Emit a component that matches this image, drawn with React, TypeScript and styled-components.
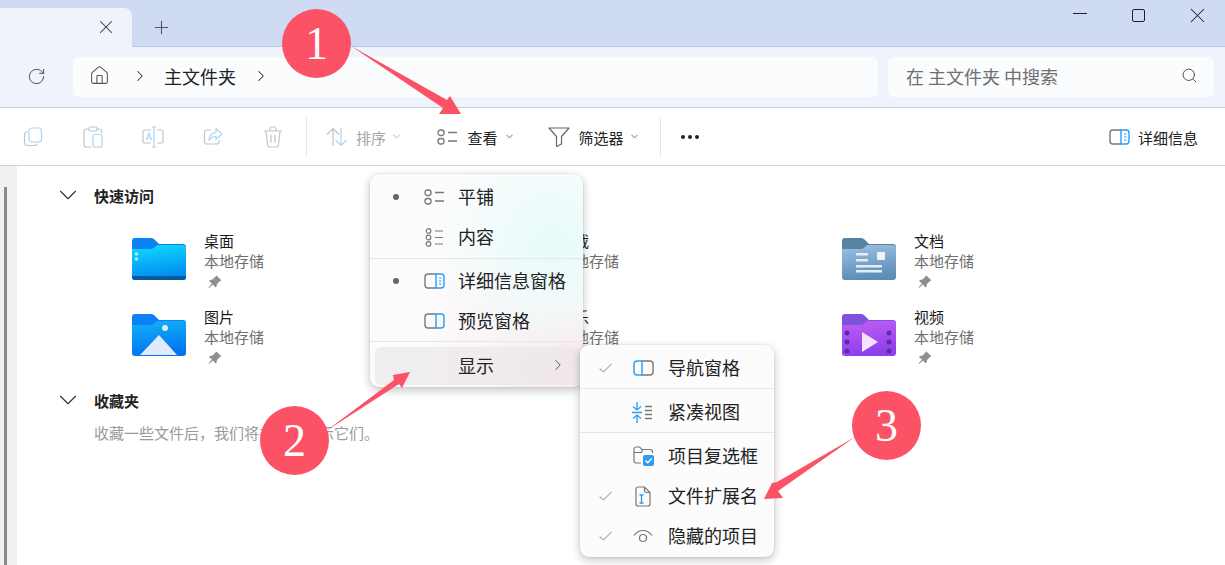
import React from 'react';
import styled, { createGlobalStyle } from 'styled-components';
import { ChevronDown, ChevronRight, Check, Home, Plus, RotateCw, Search, X } from 'lucide-react';

const GlobalStyle = createGlobalStyle`
  html, body { margin: 0; padding: 0; background: #fff; }
  * { box-sizing: border-box; }
`;

const Page = styled.div`
  position: relative;
  width: 1225px;
  height: 565px;
  overflow: hidden;
  background: #fff;
  color: #1c1c1c;
  font-family: "Noto Sans CJK SC", "Noto Sans", sans-serif;
`;

const TabBar = styled.div`
  display: flex;
  align-items: flex-end;
  height: 47px;
  background: #cfdaf3;
  border-bottom: 1px solid #bcc8dc;
`;

const Tab = styled.div`
  display: flex;
  align-items: center;
  justify-content: flex-end;
  width: 132px;
  height: 39px;
  margin-bottom: -1px;
  padding: 0 15px 1px 0;
  background: #eef3fc;
  border-top-right-radius: 8px;
  color: #333;
`;

const NewTab = styled.div`
  display: flex;
  align-items: center;
  justify-content: center;
  width: 58px;
  height: 38px;
  color: #555;
`;

const WindowControls = styled.div`
  display: flex;
  margin: 0 -2px 0 auto;
  align-self: flex-start;
  height: 30px;
`;

const WindowButton = styled.div`
  display: flex;
  align-items: center;
  justify-content: center;
  width: 59px;
  height: 30px;
  color: #222;
`;

const MinimizeLine = styled.span`
  width: 14px;
  height: 1px;
  margin-bottom: 4px;
  background: #222;
`;

const MaximizeBox = styled.span`
  width: 13px;
  height: 13px;
  border: 1.3px solid #222;
  border-radius: 2px;
`;

const AddressBar = styled.div`
  display: flex;
  align-items: center;
  height: 61px;
  padding: 0 11px 1px 0;
  background: #eff3fc;
  border-bottom: 1px solid #c8ccd8;
`;

const RefreshSlot = styled.div`
  display: flex;
  justify-content: center;
  width: 72px;
  margin-right: 1px;
  color: #444;
`;

const Breadcrumb = styled.div`
  display: flex;
  align-items: center;
  flex: 1;
  height: 40px;
  padding: 0 0 2px 16px;
  background: #fbfcfe;
  border-radius: 6px;
  font-size: 18px;
  color: #222;
`;

const Crumb = styled.span`
  margin: 0 16px 0 15px;
`;

const Separator = styled.span<{ $lead?: number }>`
  display: flex;
  margin-left: ${(p) => p.$lead ?? 0}px;
  color: #333;
`;

const SearchBox = styled.div`
  display: flex;
  align-items: center;
  justify-content: space-between;
  width: 326px;
  height: 40px;
  margin-left: 10px;
  padding: 0 16px 2px 18px;
  background: #fbfcfe;
  border-radius: 6px;
  font-size: 18px;
  color: #6f6f6f;
`;

const Toolbar = styled.div`
  display: flex;
  align-items: center;
  height: 58px;
  padding-left: 3px;
  background: #fff;
  border-bottom: 1px solid #cdd0d8;
`;

const IconButton = styled.div`
  display: flex;
  align-items: center;
  justify-content: center;
  width: 60px;
  height: 40px;
`;

const ToolDivider = styled.div<{ $lead?: number }>`
  width: 1px;
  height: 40px;
  margin-left: ${(p) => p.$lead ?? 0}px;
  background: #e8e8e8;
`;

const TextButton = styled.div<{ $width: number; $disabled?: boolean; $gap: number; $pad?: number }>`
  display: flex;
  align-items: center;
  gap: ${(p) => p.$gap}px;
  width: ${(p) => p.$width}px;
  padding-left: ${(p) => p.$pad ?? 0}px;
  font-size: 15px;
  color: ${(p) => (p.$disabled ? '#a6a6a6' : '#222')};
`;

const ButtonLabel = styled.span`
  position: relative;
  top: 1px;
`;

const Caret = styled.span<{ $disabled?: boolean }>`
  display: flex;
  margin-left: -3px;
  color: ${(p) => (p.$disabled ? '#aaa' : '#666')};
`;

const Dots = styled.div`
  display: flex;
  gap: 3px;
  margin-left: 20px;
`;

const Dot = styled.span`
  width: 4px;
  height: 4px;
  border-radius: 50%;
  background: #222;
`;

const DetailsButton = styled.div`
  display: flex;
  align-items: center;
  gap: 8px;
  margin-left: auto;
  padding-right: 27px;
  font-size: 15px;
  color: #222;
`;

const Body = styled.div`
  display: flex;
  height: 399px;
`;

const Rail = styled.div`
  width: 17px;
  padding: 21px 0 0 4px;
  background: #f1f1f1;
`;

const RailThumb = styled.div`
  width: 3px;
  height: 100%;
  background: #8a8a8a;
`;

const Content = styled.div`
  flex: 1;
  padding: 19px 0 0 43px;
`;

const SectionHead = styled.div`
  display: flex;
  align-items: center;
  gap: 19px;
  height: 20px;
  font-size: 15px;
  font-weight: 700;
  color: #222;
`;

const SectionCaret = styled.span`
  display: flex;
  justify-content: center;
  width: 15px;
  color: #333;

  svg {
    flex-shrink: 0;
  }
`;

const Grid = styled.div`
  display: grid;
  grid-template-columns: repeat(3, 355px);
  grid-auto-rows: 76px;
  margin: 29px 0 0 72px;
  height: 156px;
`;

const Item = styled.div`
  display: flex;
  gap: 18px;
`;

const FolderSlot = styled.div`
  padding-top: 4px;
  width: 54px;
  height: 48px;
`;

const ItemText = styled.div`
  display: flex;
  flex-direction: column;
  font-size: 15px;
  line-height: 20px;
  margin-top: -3px;
`;

const ItemName = styled.div`
  color: #1a1a1a;
`;

const ItemSub = styled.div`
  color: #6e6e6e;
`;

const PinSlot = styled.div`
  display: flex;
  height: 22px;
  align-items: center;
  padding-left: 4px;
`;

const EmptyNote = styled.div`
  margin: 13px 0 0 34px;
  font-size: 15px;
  line-height: 20px;
  color: #9a9a9a;
`;

const Menu = styled.div<{ $left: number; $top: number; $width: number; $height: number; $glow?: boolean }>`
  position: absolute;
  left: ${(p) => p.$left}px;
  top: ${(p) => p.$top}px;
  width: ${(p) => p.$width}px;
  height: ${(p) => p.$height}px;
  padding-top: 3px;
  border-radius: 9px;
  background: ${(p) =>
    p.$glow
      ? 'radial-gradient(circle at 85% 32%, #e6fbfa 0%, rgba(240,252,252,.7) 28%, rgba(255,255,255,0) 52%), radial-gradient(circle at 95% 88%, #f8e6ea 0%, rgba(250,240,242,.7) 30%, rgba(255,255,255,0) 60%), #fcfcfc'
      : '#fcfcfc'};
  box-shadow: 0 3px 10px rgba(0, 0, 0, 0.24), 0 0 2px rgba(0, 0, 0, 0.12);
`;

const MenuRow = styled.div<{ $hover?: boolean }>`
  display: flex;
  align-items: center;
  height: ${(p) => (p.$hover ? 38 : 40)}px;
  margin: ${(p) => (p.$hover ? '0 3px 0 5px' : '0')};
  padding: 0 0 2px ${(p) => (p.$hover ? 83 : 88)}px;
  position: relative;
  font-size: 18px;
  color: #222;
  border-radius: 6px;
  background: ${(p) => (p.$hover ? 'rgba(236,232,234,.72)' : 'transparent')};
`;

const RowMark = styled.div<{ $left: number }>`
  position: absolute;
  left: ${(p) => p.$left}px;
  top: 0;
  height: 100%;
  display: flex;
  align-items: center;
  color: #666;
`;

const Bullet = styled.span`
  width: 6px;
  height: 6px;
  border-radius: 50%;
  background: #666;
`;

const MenuDivider = styled.div<{ $above?: number; $below?: number }>`
  height: 1px;
  margin: ${(p) => p.$above ?? 0}px 0 ${(p) => p.$below ?? 3}px;
  background: #e6e6e6;
`;

const SubArrow = styled.span`
  position: absolute;
  right: 13px;
  display: flex;
  color: #555;
`;

const Badge = styled.div<{ $left: number; $top: number }>`
  position: absolute;
  left: ${(p) => p.$left}px;
  top: ${(p) => p.$top}px;
  display: flex;
  align-items: center;
  justify-content: center;
  width: 69px;
  height: 69px;
  border-radius: 50%;
  background: #fb5266;
  color: #fff;
  font-family: "Liberation Serif", serif;
  font-size: 46px;
`;

const ArrowLayer = styled.svg`
  position: absolute;
  left: 0;
  top: 0;
`;

const GRAY = '#777';
const BLUE = '#2d9cf0';

const CopyIcon = () => (
  <svg width="20" height="20" viewBox="0 0 20 20" fill="none" strokeWidth="1.2">
    <path d="M4.5 4.5C2.8 5 1.5 6 1.5 8v7c0 2 1.2 3.5 3.5 3.5h6.5c1.5 0 2.6-.8 3-2" stroke="#c4c4c4" />
    <rect x="6" y="1" width="12.5" height="14" rx="3" stroke="#a9d6f6" />
  </svg>
);

const PasteIcon = () => (
  <svg width="20" height="22" viewBox="0 0 20 22" fill="none" strokeWidth="1.2">
    <path d="M6 3H3.5C2 3 1 4 1 5.5v13C1 20 2 21 3.5 21H8M14 3h2.500C18 3 18.500 4 18.500 5v2" stroke="#c4c4c4" />
    <rect x="6" y="1" width="8" height="4" rx="1.5" stroke="#c4c4c4" />
    <rect x="10" y="8.500" width="9" height="12.500" rx="2" stroke="#a9d6f6" />
  </svg>
);

const RenameIcon = () => (
  <svg width="22" height="22" viewBox="0 0 22 22" fill="none" strokeWidth="1.2">
    <path d="M9 4H3C1.800 4 1 5 1 6v9c0 1.200.8 2 2 2h6M15 4h4c1.200 0 2 1 2 2v9c0 1.200-.8 2-2 2h-4" stroke="#c4c4c4" />
    <path d="M12 1v20M9.500 1h5M9.500 21h5" stroke="#a9d6f6" />
    <path d="M4.500 14 7 7l2.500 7M5.500 12h3" stroke="#a9d6f6" />
  </svg>
);

const ShareIcon = () => (
  <svg width="20" height="20" viewBox="0 0 20 20" fill="none" strokeWidth="1.2">
    <path d="M8 3H4C2.500 3 1.500 4 1.500 5.500v9C1.500 16 2.500 17 4 17h9.500c1.500 0 2.500-1 2.500-2.500V13" stroke="#c4c4c4" />
    <path d="M13 1.500 19 7l-6 5.500V9.500c-3.500 0-5.500 1-7 4 0-5 2.500-7.500 7-8z" stroke="#a9d6f6" />
  </svg>
);

const TrashIcon = () => (
  <svg width="20" height="22" viewBox="0 0 20 22" fill="none" stroke="#c4c4c4" strokeWidth="1.2">
    <path d="M1 5h18M7 5V3c0-1 .8-2 2-2h2c1.200 0 2 1 2 2v2M3 5l1.500 14c.1 1.200 1 2 2 2h7c1 0 1.900-.8 2-2L17 5M8 9v8M12 9v8" />
  </svg>
);

const SortIcon = () => (
  <svg width="22" height="20" viewBox="0 0 22 20" fill="none" strokeWidth="1.2">
    <path d="M7 19V1.500M1 7.500l6-6 6 6" stroke="#c4c4c4" />
    <path d="M15 1v17.500M9.500 13l5.500 5.500 5.500-5.500" stroke="#a9d6f6" />
  </svg>
);

const TilesIcon = () => (
  <svg width="21" height="16" viewBox="0 0 21 16" fill="none" stroke={GRAY} strokeWidth="1.300">
    <rect x="1" y="1" width="6" height="5.500" rx="2.500" />
    <rect x="1" y="9.500" width="6" height="5.500" rx="2.500" />
    <path d="M11 3.500h9M11 12h9" />
  </svg>
);

const ContentIcon = () => (
  <svg width="19" height="19" viewBox="0 0 19 19" fill="none" stroke={GRAY} strokeWidth="1.200">
    <circle cx="3.500" cy="3" r="2.300" />
    <circle cx="3.500" cy="9.500" r="2.300" />
    <circle cx="3.500" cy="16" r="2.300" />
    <path d="M10 3h8M10 9.500h8M10 16h8" />
  </svg>
);

const FilterIcon = () => (
  <svg width="22" height="20" viewBox="0 0 22 20" fill="none" stroke="#666" strokeWidth="1.200">
    <path d="M1 1h20l-7.500 8.500V17l-5 2.500v-10z" strokeLinejoin="round" />
  </svg>
);

const DetailsPaneIcon = () => (
  <svg width="21" height="16" viewBox="0 0 21 16" fill="none" strokeWidth="1.400">
    <path d="M12 1H4C2 1 1 2 1 4v8c0 2 1 3 3 3h8" stroke={GRAY} />
    <path d="M12 1h5c2 0 3 1 3 3v8c0 2-1 3-3 3h-5z" stroke={BLUE} />
    <path d="M15 5h2.500M15 8h2.500M15 11h2.500" stroke={BLUE} strokeWidth="1.200" />
  </svg>
);

const PreviewPaneIcon = () => (
  <svg width="21" height="16" viewBox="0 0 21 16" fill="none" strokeWidth="1.400">
    <path d="M12 1H4C2 1 1 2 1 4v8c0 2 1 3 3 3h8" stroke={GRAY} />
    <path d="M12 1h5c2 0 3 1 3 3v8c0 2-1 3-3 3h-5z" stroke={BLUE} />
  </svg>
);

const NavPaneIcon = () => (
  <svg width="21" height="16" viewBox="0 0 21 16" fill="none" strokeWidth="1.400">
    <path d="M9 1h8c2 0 3 1 3 3v8c0 2-1 3-3 3H9" stroke={GRAY} />
    <path d="M9 1H4C2 1 1 2 1 4v8c0 2 1 3 3 3h5z" stroke={BLUE} />
  </svg>
);

const CompactIcon = () => (
  <svg width="21" height="21" viewBox="0 0 21 21" fill="none" strokeWidth="1.300">
    <path d="M5 0v8M1 4.500l4 3.500 4-3.500M5 21v-8M1 16.500L5 13l4 3.500M0 10.500h10" stroke={BLUE} />
    <path d="M13 4.500h7M13 8.500h7M13 12.500h7M13 16.500h7" stroke={GRAY} />
  </svg>
);

const CheckboxFolderIcon = () => (
  <svg width="21" height="20" viewBox="0 0 21 20" fill="none">
    <path d="M8 17H3.500C2 17 1 16 1 14.500V3C1 2 2 1 3 1h3.500l2.500 2.500h8c1.500 0 2.500 1 2.500 2.500v1M1 6.500h7.500L9.500 3.500" stroke={GRAY} strokeWidth="1.200" />
    <rect x="10" y="9" width="11" height="11" rx="2" fill={BLUE} />
    <path d="M12.500 14.500l2.200 2.200 4-4.200" stroke="#fff" strokeWidth="1.300" />
  </svg>
);

const ExtensionIcon = () => (
  <svg width="16" height="21" viewBox="0 0 16 21" fill="none">
    <path d="M9.500 1H3C1.800 1 1 2 1 3v15c0 1.200.8 2 2 2h10c1.200 0 2-.8 2-2V6.500zM9.500 1v3.500c0 1.200.8 2 2 2H15" stroke={GRAY} strokeWidth="1.200" />
    <path d="M4.500 9h4M6.500 9v8M4.500 17h4" stroke={BLUE} strokeWidth="1.300" />
  </svg>
);

const EyeIcon = () => (
  <svg width="20" height="14" viewBox="0 0 20 14" fill="none" stroke={GRAY} strokeWidth="1.200">
    <path d="M1 6.500C3.500 3 6.500 1.500 10 1.500s6.500 1.500 9 5" />
    <circle cx="10" cy="9" r="3.500" />
  </svg>
);

const PinIcon = () => (
  <svg width="14" height="14" viewBox="0 0 14 14" fill="#8f8f8f">
    <path d="M8.500.5l5 5-1.500.5-3 3-.5 2.500-1 1-2.500-3L1 13l-.5-.5 3.500-4L1 6l1-1 2.500-.5 3-3z" />
  </svg>
);

type FolderKind = 'desktop' | 'download' | 'docs' | 'pictures' | 'music' | 'videos';

const folderColors: Record<FolderKind, { tab: string; top: string; bottom: string }> = {
  desktop: { tab: '#0a82f5', top: '#10dcff', bottom: '#018cf0' },
  download: { tab: '#0a86f5', top: '#12b7fb', bottom: '#0186ee' },
  docs: { tab: '#54849f', top: '#9dc2e3', bottom: '#5f8db6' },
  pictures: { tab: '#0a82f5', top: '#12b3fb', bottom: '#0274ee' },
  music: { tab: '#e8632c', top: '#fb9a58', bottom: '#ea5a3a' },
  videos: { tab: '#7f52dc', top: '#c25ff6', bottom: '#8d3fe8' },
};

const FolderIcon = ({ kind }: { kind: FolderKind }) => {
  const c = folderColors[kind];
  return (
    <svg width="54" height="42" viewBox="0 0 54 42">
      <defs>
        <linearGradient id={`f-${kind}`} x1="0" y1="0" x2="0.2" y2="1">
          <stop offset="0" stopColor={c.top} />
          <stop offset="1" stopColor={c.bottom} />
        </linearGradient>
      </defs>
      <path d="M3 0h16c2 0 3 1 4 2l4 4h24c2 0 3 1 3 3v6H0V3C0 1 1 0 3 0z" fill={c.tab} />
      <path d="M0 11h18c3 0 4-1 6-3l1-1h26c2 0 3 1 3 3v29c0 2-1 3-3 3H3c-2 0-3-1-3-3z" fill={`url(#f-${kind})`} />
      {kind === 'desktop' && (
        <>
          <circle cx="4.500" cy="16" r="1.800" fill="#a9ecfc" />
          <circle cx="4.500" cy="21" r="1.800" fill="#a9ecfc" />
          <path d="M0 38h54v1c0 2-1 3-3 3H3c-2 0-3-1-3-3z" fill="#04599f" />
        </>
      )}
      {kind === 'docs' && (
        <>
          <rect x="35" y="14" width="8" height="8" rx="1" fill="#eef5fb" />
          <path d="M14 15h12v2.500H14zM14 21h12v2.500H14zM14 27h26v2.500H14zM14 32h26v2.500H14z" fill="#e2edf6" />
        </>
      )}
      {kind === 'pictures' && (
        <>
          <circle cx="33" cy="14" r="3" fill="#d6efff" />
          <path d="M8 41l19-20 18 20z" fill="#dfeafb" />
        </>
      )}
      {kind === 'videos' && (
        <>
          <path d="M20 18l16 10-16 10z" fill="#f3e3fc" />
          <circle cx="5" cy="19" r="2.500" fill="#5b2aa6" />
          <circle cx="5" cy="28" r="2.500" fill="#5b2aa6" />
          <circle cx="5" cy="37" r="2.500" fill="#5b2aa6" />
          <circle cx="47" cy="19" r="2.500" fill="#5b2aa6" />
          <circle cx="47" cy="28" r="2.500" fill="#5b2aa6" />
          <circle cx="47" cy="37" r="2.500" fill="#5b2aa6" />
        </>
      )}
    </svg>
  );
};

const folders: { name: string; kind: FolderKind }[] = [
  { name: '桌面', kind: 'desktop' },
  { name: '下载', kind: 'download' },
  { name: '文档', kind: 'docs' },
  { name: '图片', kind: 'pictures' },
  { name: '音乐', kind: 'music' },
  { name: '视频', kind: 'videos' },
];

const App = () => {
  return (
    <Page>
      <GlobalStyle />
      <TabBar>
        <Tab>
          <X size={22} strokeWidth={1.1} />
        </Tab>
        <NewTab>
          <Plus size={21} strokeWidth={1.2} />
        </NewTab>
        <WindowControls>
          <WindowButton><MinimizeLine /></WindowButton>
          <WindowButton><MaximizeBox /></WindowButton>
          <WindowButton><X size={25} strokeWidth={1} /></WindowButton>
        </WindowControls>
      </TabBar>

      <AddressBar>
        <RefreshSlot>
          <RotateCw size={19} strokeWidth={1.2} />
        </RefreshSlot>
        <Breadcrumb>
          <Home size={21} strokeWidth={1.2} color="#555" />
          <Separator $lead={21}>
            <ChevronRight size={18} strokeWidth={1.4} />
          </Separator>
          <Crumb>主文件夹</Crumb>
          <Separator>
            <ChevronRight size={18} strokeWidth={1.4} />
          </Separator>
        </Breadcrumb>
        <SearchBox>
          <span>在 主文件夹 中搜索</span>
          <Search size={17} strokeWidth={1.3} color="#444" />
        </SearchBox>
      </AddressBar>

      <Toolbar>
        <IconButton><CopyIcon /></IconButton>
        <IconButton><PasteIcon /></IconButton>
        <IconButton><RenameIcon /></IconButton>
        <IconButton><ShareIcon /></IconButton>
        <IconButton><TrashIcon /></IconButton>
        <ToolDivider $lead={3} />
        <TextButton $disabled $width={130} $gap={8} $pad={19}>
          <SortIcon />
          <ButtonLabel>排序</ButtonLabel>
          <Caret $disabled><ChevronDown size={11} /></Caret>
        </TextButton>
        <TextButton $width={111} $gap={9.5}>
          <TilesIcon />
          <ButtonLabel>查看</ButtonLabel>
          <Caret><ChevronDown size={11} /></Caret>
        </TextButton>
        <TextButton $width={112} $gap={8.5}>
          <FilterIcon />
          <ButtonLabel>筛选器</ButtonLabel>
          <Caret><ChevronDown size={11} /></Caret>
        </TextButton>
        <ToolDivider />
        <Dots><Dot /><Dot /><Dot /></Dots>
        <DetailsButton>
          <DetailsPaneIcon />
          <ButtonLabel>详细信息</ButtonLabel>
        </DetailsButton>
      </Toolbar>

      <Body>
        <Rail><RailThumb /></Rail>
        <Content>
          <SectionHead>
            <SectionCaret><ChevronDown size={30} strokeWidth={0.9} /></SectionCaret>
            <span>快速访问</span>
          </SectionHead>
          <Grid>
            {folders.map((f) => (
              <Item key={f.name}>
                <FolderSlot><FolderIcon kind={f.kind} /></FolderSlot>
                <ItemText>
                  <ItemName>{f.name}</ItemName>
                  <ItemSub>本地存储</ItemSub>
                  <PinSlot><PinIcon /></PinSlot>
                </ItemText>
              </Item>
            ))}
          </Grid>
          <SectionHead>
            <SectionCaret><ChevronDown size={30} strokeWidth={0.9} /></SectionCaret>
            <span>收藏夹</span>
          </SectionHead>
          <EmptyNote>收藏一些文件后，我们将在此处显示它们。</EmptyNote>
        </Content>
      </Body>

      <Menu $left={370} $top={174} $width={213} $height={213} $glow>
        <MenuRow>
          <RowMark $left={23}><Bullet /></RowMark>
          <RowMark $left={54}><TilesIcon /></RowMark>
          平铺
        </MenuRow>
        <MenuRow>
          <RowMark $left={55}><ContentIcon /></RowMark>
          内容
        </MenuRow>
        <MenuDivider $above={1} $below={2} />
        <MenuRow>
          <RowMark $left={23}><Bullet /></RowMark>
          <RowMark $left={54}><DetailsPaneIcon /></RowMark>
          详细信息窗格
        </MenuRow>
        <MenuRow>
          <RowMark $left={54}><PreviewPaneIcon /></RowMark>
          预览窗格
        </MenuRow>
        <MenuDivider $below={5} />
        <MenuRow $hover>
          显示
          <SubArrow><ChevronRight size={18} strokeWidth={1.3} /></SubArrow>
        </MenuRow>
      </Menu>

      <Menu $left={580} $top={345} $width={194} $height={212}>
        <MenuRow>
          <RowMark $left={17}><Check size={17} strokeWidth={1.1} /></RowMark>
          <RowMark $left={53}><NavPaneIcon /></RowMark>
          导航窗格
        </MenuRow>
        <MenuDivider />
        <MenuRow>
          <RowMark $left={52}><CompactIcon /></RowMark>
          紧凑视图
        </MenuRow>
        <MenuDivider />
        <MenuRow>
          <RowMark $left={53}><CheckboxFolderIcon /></RowMark>
          项目复选框
        </MenuRow>
        <MenuRow>
          <RowMark $left={17}><Check size={17} strokeWidth={1.1} /></RowMark>
          <RowMark $left={55}><ExtensionIcon /></RowMark>
          文件扩展名
        </MenuRow>
        <MenuRow>
          <RowMark $left={17}><Check size={17} strokeWidth={1.1} /></RowMark>
          <RowMark $left={53}><EyeIcon /></RowMark>
          隐藏的项目
        </MenuRow>
      </Menu>

      <ArrowLayer width="1225" height="565" viewBox="0 0 1225 565" fill="#fb5266">
        <polygon points="351,46 447,100 450,96 461,114 439,114 443,108" />
        <polygon points="326,431 394,380 393,375 410,372 402,388 399,384" />
        <polygon points="855,437 777,482 772,483 764,499 783,498 778,491" />
      </ArrowLayer>
      <Badge $left={282} $top={9}>1</Badge>
      <Badge $left={260} $top={406}>2</Badge>
      <Badge $left={852} $top={391}>3</Badge>
    </Page>
  );
};

export default App;
